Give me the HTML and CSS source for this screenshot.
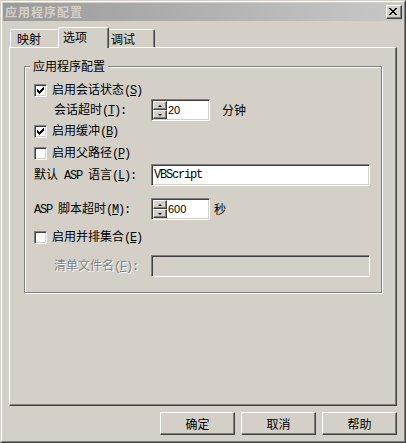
FILE: index.html
```html
<!DOCTYPE html>
<html lang="zh-CN">
<head>
<meta charset="utf-8">
<title>应用程序配置</title>
<link rel="stylesheet" href="styles.css">
</head>
<body>
<div class="window">
  <div class="frame">
    <div class="titlebar">
      <span class="title">应用程序配置</span>
      <span class="close"><svg width="8" height="7" viewBox="0 0 8 7" shape-rendering="crispEdges"><path fill="#000" d="M0 0h2v1H0zM6 0h2v1H6zM1 1h2v1H1zM5 1h2v1H5zM2 2h4v1H2zM3 3h2v1H3zM2 4h4v1H2zM1 5h2v1H1zM5 5h2v1H5zM0 6h2v1H0zM6 6h2v1H6z"/></svg></span>
    </div>
    <div class="content">
      <div class="tabs">
        <div class="tab first">映射</div>
        <div class="tab active">选项</div>
        <div class="tab last">调试</div>
      </div>
      <div class="panel">
        <div class="group">
          <span class="legend">应用程序配置</span>

          <div class="row chk">
            <span class="cb"><svg width="7" height="7" viewBox="0 0 7 7" shape-rendering="crispEdges"><path fill="#000" d="M6 0h1v1H6zM5 1h2v1H5zM0 2h1v1H0zM4 2h3v1H4zM0 3h2v1H0zM3 3h3v1H3zM0 4h5v1H0zM1 5h3v1H1zM2 6h1v1H2z"/></svg></span>
            <span>启用会话状态<span class="m">(<u>S</u>)</span></span>
          </div>

          <div class="row field">
            <span class="lbl indent">会话超时<span class="m">(<u>T</u>):</span></span>
            <span class="spin">
              <span class="arrows"><span class="sb"><span class="up"></span></span><span class="sb"><span class="down"></span></span></span>
              <span class="num">20</span>
            </span>
            <span class="unit u1">分钟</span>
          </div>

          <div class="row chk r3">
            <span class="cb"><svg width="7" height="7" viewBox="0 0 7 7" shape-rendering="crispEdges"><path fill="#000" d="M6 0h1v1H6zM5 1h2v1H5zM0 2h1v1H0zM4 2h3v1H4zM0 3h2v1H0zM3 3h3v1H3zM0 4h5v1H0zM1 5h3v1H1zM2 6h1v1H2z"/></svg></span>
            <span>启用缓冲<span class="m">(<u>B</u>)</span></span>
          </div>

          <div class="row chk r4">
            <span class="cb"></span>
            <span>启用父路径<span class="m">(<u>P</u>)</span></span>
          </div>

          <div class="row field r5">
            <span class="lbl">默认<span class="m"> ASP </span>语言<span class="m">(<u>L</u>):</span></span>
            <span class="text"><span class="m">VBScript</span></span>
          </div>

          <div class="row field r6">
            <span class="lbl"><span class="m">ASP </span>脚本超时<span class="m">(<u>M</u>):</span></span>
            <span class="spin">
              <span class="arrows"><span class="sb"><span class="up"></span></span><span class="sb"><span class="down"></span></span></span>
              <span class="num">600</span>
            </span>
            <span class="unit u2">秒</span>
          </div>

          <div class="row chk r7">
            <span class="cb"></span>
            <span>启用并排集合<span class="m">(<u>E</u>)</span></span>
          </div>

          <div class="row field r8">
            <span class="lbl indent disabled">清单文件名<span class="m">(<u>F</u>):</span></span>
            <span class="text off"></span>
          </div>
        </div>
      </div>
      <div class="buttons">
        <span class="btn">确定</span>
        <span class="btn">取消</span>
        <span class="btn">帮助</span>
      </div>
    </div>
  </div>
</div>
</body>
</html>
```
FILE: styles.css
```css
* { box-sizing: border-box; }
html, body { margin: 0; padding: 0; }
body {
  width: 406px;
  height: 443px;
  overflow: hidden;
  background: #d4d0c8;
  font-family: "Noto Sans CJK SC", sans-serif;
  font-size: 12px;
  line-height: 14px;
  color: #000;
}
.window {
  width: 406px;
  height: 443px;
  border: 1px solid;
  border-color: #d4d0c8 #404040 #404040 #d4d0c8;
}
.frame {
  height: 100%;
  border: 1px solid;
  border-color: #fff #808080 #808080 #fff;
  padding: 1px;
  display: flex;
  flex-direction: column;
}
.titlebar {
  flex: none;
  height: 18px;
  display: flex;
  justify-content: space-between;
  align-items: flex-start;
  background: linear-gradient(to right, #9a9a9a, #c8c8c8);
}
.title {
  font-weight: 700;
  color: #d4d0c8;
  line-height: 18px;
  padding-left: 2px;
  letter-spacing: 1px;
}
.close {
  width: 16px;
  height: 14px;
  margin: 2px 1px 0 0;
  background: #d4d0c8;
  border: 1px solid;
  border-color: #fff #404040 #404040 #fff;
  box-shadow: inset -1px -1px #808080;
}
.close svg { display: block; margin: 2px 0 0 2px; }

.content {
  flex: 1;
  display: flex;
  flex-direction: column;
  padding: 6px 6px 0 6px;
}
.tabs {
  flex: none;
  height: 20px;
  display: flex;
  align-items: flex-end;
  padding-left: 1px;
  position: relative;
  z-index: 1;
}
.tab {
  height: 18px;
  line-height: 17px;
  border-top: 1px solid #fff;
  background: #d4d0c8;
}
.tab.first {
  width: 48px;
  border-left: 1px solid #fff;
  border-top-left-radius: 2px;
  padding-left: 6px;
}
.tab.active {
  width: 51px;
  height: 21px;
  margin-bottom: -1px;
  line-height: 18px;
  border-left: 1px solid #fff;
  border-right: 1px solid #404040;
  box-shadow: inset -1px 0 #808080;
  border-radius: 2px 2px 0 0;
  padding-left: 4px;
}
.tab.last {
  width: 46px;
  border-right: 1px solid #404040;
  box-shadow: inset -1px 0 #808080;
  border-top-right-radius: 2px;
  padding-left: 2px;
}
.panel {
  flex: none;
  height: 359px;
  border: 1px solid;
  border-color: #fff #404040 #404040 #fff;
  box-shadow: inset -1px -1px #808080;
  padding: 18px 0 0 14px;
}
.group {
  position: relative;
  width: 358px;
  height: 227px;
  border: 1px solid #808080;
  box-shadow: inset 1px 1px #fff, 1px 1px #fff;
  padding: 14px 0 0 9px;
}
.legend {
  position: absolute;
  left: 5px;
  top: -8px;
  padding: 0 3px;
  background: #d4d0c8;
  line-height: 14px;
}
.row { display: flex; align-items: center; }
.row.chk { height: 18px; }
.row.field { height: 22px; }
.r3 { margin-top: 1px; }
.r4 { margin-top: 4px; }
.r5 { margin-top: 2px; }
.r6 { margin-top: 12px; }
.r7 { margin-top: 8px; }
.r8 { margin-top: 9px; }

.m {
  font-family: "Liberation Mono", monospace;
  font-size: 12px;
  letter-spacing: -1.2px;
  white-space: pre;
}
.cb {
  flex: none;
  width: 13px;
  height: 13px;
  margin-right: 5px;
  background: #fff;
  border: 1px solid;
  border-color: #808080 #fff #fff #808080;
  box-shadow: inset 1px 1px #404040, inset -1px -1px #d4d0c8;
}
.cb svg { display: block; margin: 2px 0 0 2px; }
.lbl { flex: none; width: 117px; }
.indent { padding-left: 20px; }
.disabled { color: #808080; text-shadow: 1px 1px 0 #fff; }

.spin {
  flex: none;
  width: 59px;
  height: 22px;
  display: flex;
  align-items: center;
  background: #fff;
  border: 1px solid;
  border-color: #808080 #fff #fff #808080;
  box-shadow: inset 1px 1px #404040, inset -1px -1px #d4d0c8;
  padding: 1px;
}
.arrows { display: flex; flex-direction: column; }
.sb {
  width: 14px;
  height: 9px;
  background: #d4d0c8;
  border: 1px solid;
  border-color: #fff #404040 #404040 #fff;
  box-shadow: inset -1px -1px #808080;
  display: flex;
  align-items: center;
  justify-content: center;
}
.up {
  width: 0; height: 0;
  border-left: 2px solid transparent;
  border-right: 2px solid transparent;
  border-bottom: 2px solid #000;
}
.down {
  width: 0; height: 0;
  border-left: 2px solid transparent;
  border-right: 2px solid transparent;
  border-top: 2px solid #000;
}
.num {
  font-family: "Liberation Sans", sans-serif;
  font-size: 11px;
  margin-left: 1px;
}
.unit.u1 { margin-left: 12px; }
.unit.u2 { margin-left: 4px; }

.text {
  flex: none;
  width: 219px;
  height: 22px;
  display: flex;
  align-items: center;
  background: #fff;
  border: 1px solid;
  border-color: #808080 #fff #fff #808080;
  box-shadow: inset 1px 1px #404040, inset -1px -1px #d4d0c8;
  padding-left: 2px;
}
.text.off { background: #d4d0c8; }

.buttons {
  flex: none;
  display: flex;
  justify-content: flex-end;
  gap: 6px;
  margin-top: 6px;
}
.btn {
  width: 75px;
  height: 23px;
  display: flex;
  align-items: center;
  justify-content: center;
  border: 1px solid;
  border-color: #fff #404040 #404040 #fff;
  box-shadow: inset -1px -1px #808080;
}
```
